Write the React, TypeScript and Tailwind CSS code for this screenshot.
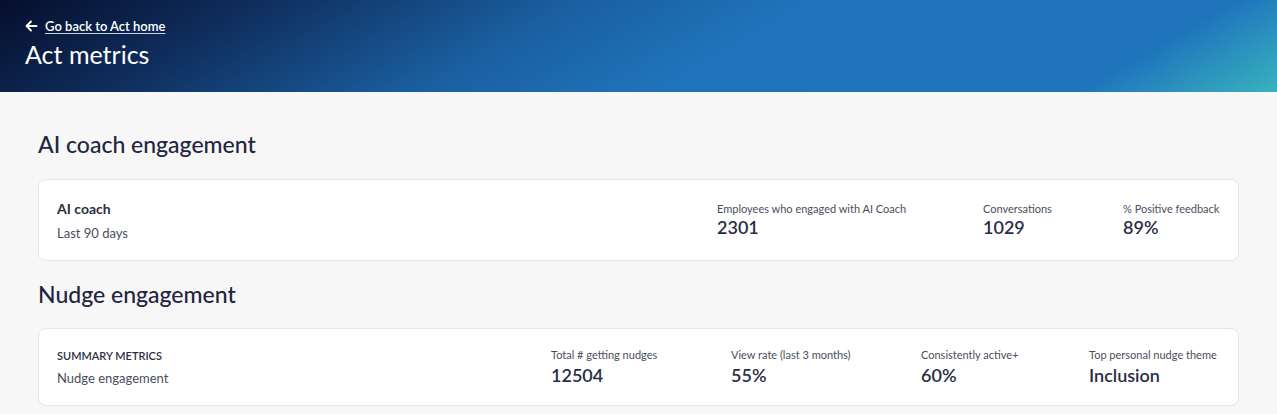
import React from "react";

const font = { fontFamily: "Lato, 'Open Sans', sans-serif" };

function Metric({ label, value, className = "", gap = "mt-0" }: { label: string; value: string; className?: string; gap?: string }) {
  return (
    <div className={"flex flex-col " + className}>
      <span className="text-[11px] leading-[14px] text-[#4a4e5c]">{label}</span>
      <span className={gap + " text-[18px] leading-[22px] font-semibold text-[#2a2d45]"}>{value}</span>
    </div>
  );
}

export default function App() {
  return (
    <div className="w-[1277px] h-[414px] overflow-hidden bg-[#f7f7f7]" style={font}>
      <header className="h-[92px] px-[25px] pt-[18px] text-white bg-[linear-gradient(150deg,#060e2c_0%,#0f2d5c_18%,#1a5fa0_40%,#1f73ba_56%,#1f74bc_86%,#38b3bf_100%)]">
        <div className="flex items-center gap-[7px]">
          <svg width="13" height="12" viewBox="0 0 13 12" fill="none" stroke="white" strokeWidth="1.8" strokeLinecap="round" strokeLinejoin="round">
            <path d="M11.5 6H1.8M6 1.5L1.5 6 6 10.5" />
          </svg>
          <a className="text-[13px] leading-[16px] font-semibold underline underline-offset-2 decoration-[#c8cfe0]">Go back to Act home</a>
        </div>
        <h1 className="mt-[5px] text-[25px] leading-[30px] font-normal">Act metrics</h1>
      </header>
      <main className="px-[38px] pt-[38px]">
        <h2 className="text-[23px] leading-[28px] font-medium text-[#22253f]">AI coach engagement</h2>
        <section className="mt-[21px] h-[82px] bg-white border border-[#e6e6e8] rounded-[8px] flex items-center pl-[18px] pr-[16px]">
          <div className="flex flex-col flex-1">
            <span className="text-[14px] leading-[18px] font-bold text-[#2a2d45]">AI coach</span>
            <span className="mt-[7px] text-[13px] leading-[16px] text-[#4a4e5c]">Last 90 days</span>
          </div>
          <Metric label="Employees who engaged with AI Coach" value="2301" className="w-[266px]" />
          <Metric label="Conversations" value="1029" className="w-[140px]" />
          <Metric label="% Positive feedback" value="89%" className="w-[99px]" />
        </section>
        <h2 className="mt-[19px] text-[23px] leading-[28px] font-medium text-[#22253f]">Nudge engagement</h2>
        <section className="mt-[20px] h-[78px] bg-white border border-[#e6e6e8] rounded-[8px] flex items-center pl-[18px] pr-[17px]">
          <div className="flex flex-col flex-1">
            <span className="text-[11px] leading-[14px] font-semibold uppercase text-[#2a2d45]">Summary metrics</span>
            <span className="mt-[7px] text-[13px] leading-[16px] text-[#4a4e5c]">Nudge engagement</span>
          </div>
          <Metric label="Total # getting nudges" value="12504" className="w-[180px]" gap="mt-[2px]" />
          <Metric label="View rate (last 3 months)" value="55%" className="w-[190px]" gap="mt-[2px]" />
          <Metric label="Consistently active+" value="60%" className="w-[168px]" gap="mt-[2px]" />
          <Metric label="Top personal nudge theme" value="Inclusion" className="w-[132px]" gap="mt-[2px]" />
        </section>
      </main>
    </div>
  );
}
